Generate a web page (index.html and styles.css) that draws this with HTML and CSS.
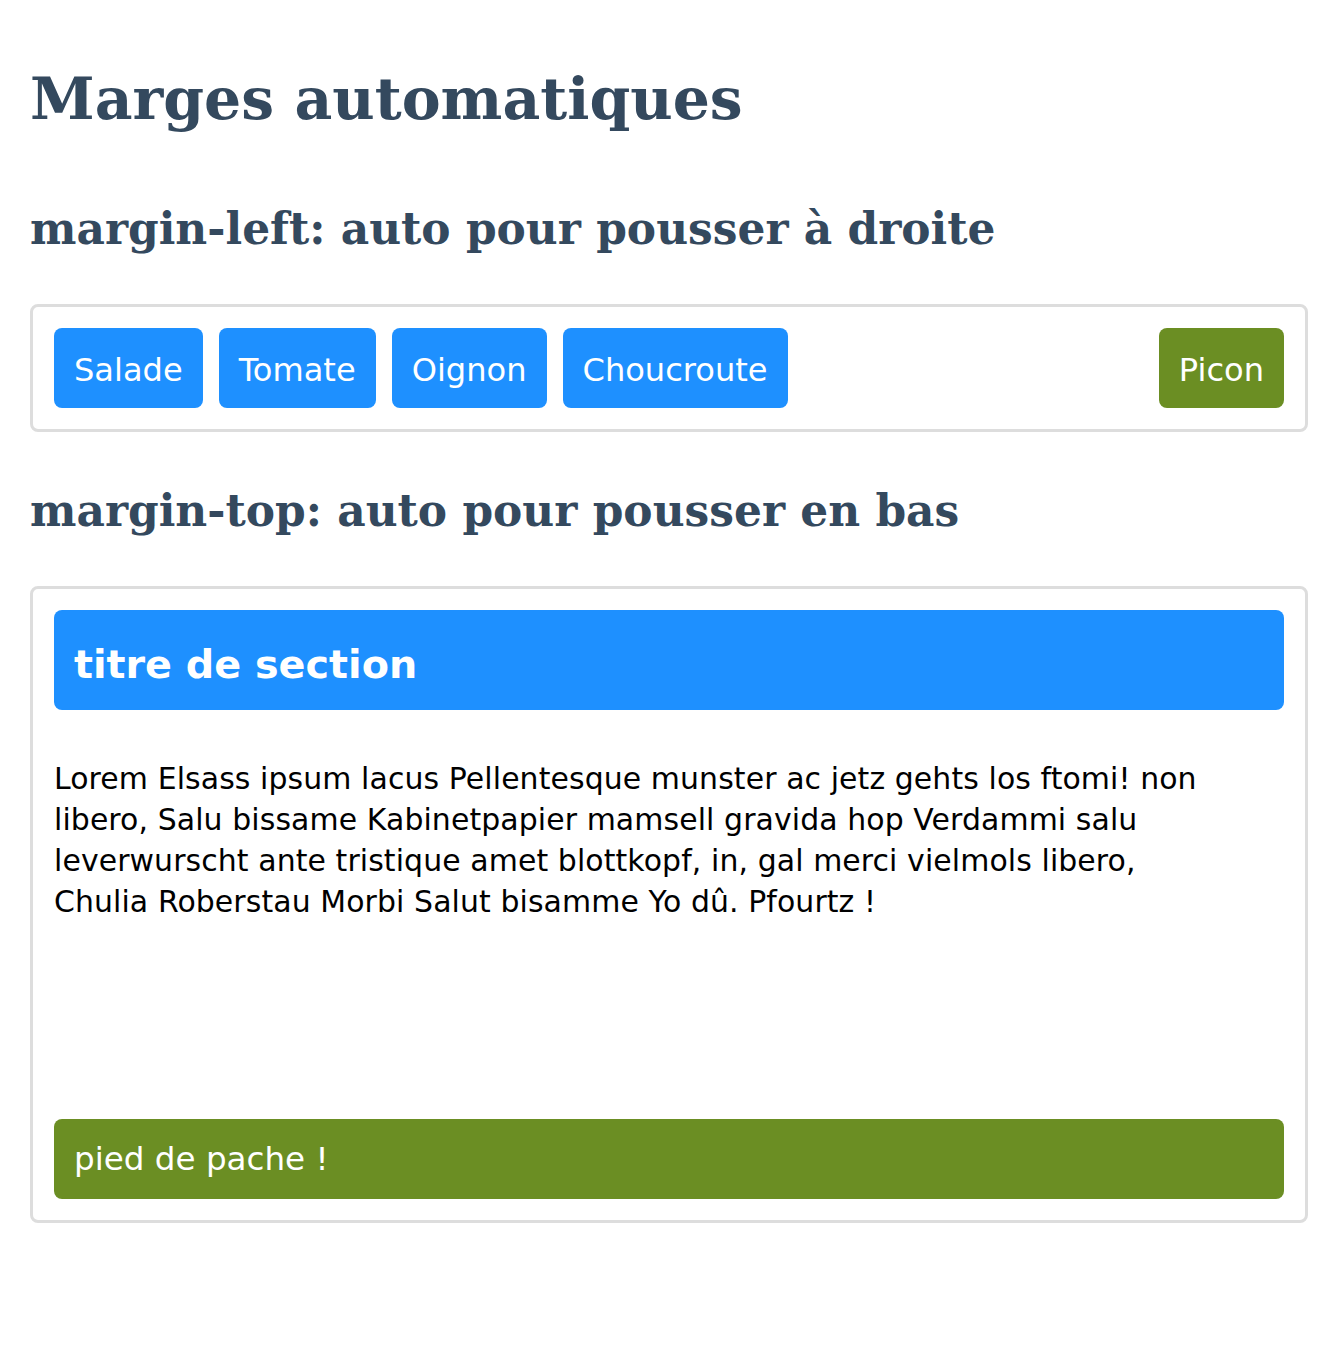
FILE: index.html
```html
<!DOCTYPE html>
<html lang="fr">
<head>
<meta charset="utf-8">
<title>Marges automatiques</title>
<link rel="stylesheet" href="styles.css">
</head>
<body>
<main class="page">
  <h1 class="title">Marges automatiques</h1>

  <h2 class="subtitle">margin-left: auto pour pousser à droite</h2>
  <div class="box row">
    <span class="btn">Salade</span>
    <span class="btn">Tomate</span>
    <span class="btn">Oignon</span>
    <span class="btn">Choucroute</span>
    <span class="btn btn-green push-right">Picon</span>
  </div>

  <h2 class="subtitle">margin-top: auto pour pousser en bas</h2>
  <div class="box column">
    <div class="section-head">titre de section</div>
    <p class="text">Lorem Elsass ipsum lacus Pellentesque munster ac jetz gehts los ftomi! non libero, Salu bissame Kabinetpapier mamsell gravida hop Verdammi salu leverwurscht ante tristique amet blottkopf, in, gal merci vielmols libero, Chulia Roberstau Morbi Salut bisamme Yo dû. Pfourtz !</p>
    <div class="footer push-bottom">pied de pache !</div>
  </div>
</main>
</body>
</html>
```

FILE: styles.css
```css
html, body {
  margin: 0;
  padding: 0;
  background: #ffffff;
}

.page {
  padding: 30px 30px 40px;
  font-family: "DejaVu Sans", sans-serif;
  color: #000;
}

.title {
  font-family: "DejaVu Serif", serif;
  font-weight: bold;
  font-size: 58.4px;
  line-height: 68px;
  color: #34495e;
  margin: 35px 0 0;
}

.subtitle {
  font-family: "DejaVu Serif", serif;
  font-weight: bold;
  font-size: 43.9px;
  line-height: 50px;
  color: #34495e;
  margin: 71px 0 50px;
}

.box + .subtitle {
  margin-top: 54px;
}

.box {
  border: 3px solid #dddddd;
  border-radius: 8px;
  padding: 21px;
}

.row {
  display: flex;
  gap: 16px;
}

.btn {
  background: #1e90ff;
  color: #fff;
  font-size: 32.1px;
  line-height: 40px;
  padding: 22px 20px 18px;
  border-radius: 8px;
}

.btn-green {
  background: #6b8e23;
}

.push-right {
  margin-left: auto;
}

.column {
  display: flex;
  flex-direction: column;
  height: 637px;
  box-sizing: border-box;
}

.section-head {
  background: #1e90ff;
  color: #fff;
  font-weight: bold;
  font-size: 39.7px;
  line-height: 60px;
  padding: 24px 20px 16px;
  border-radius: 8px;
}

.text {
  font-size: 29.9px;
  line-height: 41px;
  letter-spacing: 0.1px;
  max-width: 1160px;
  margin: 48px 0 0;
}

.footer {
  background: #6b8e23;
  color: #fff;
  font-size: 32.6px;
  line-height: 40px;
  padding: 20px;
  border-radius: 8px;
}

.push-bottom {
  margin-top: auto;
}
```
